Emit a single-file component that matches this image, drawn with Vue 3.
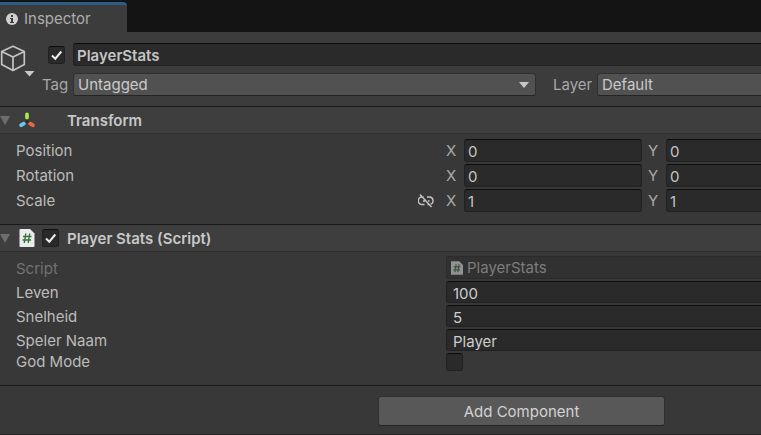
<script setup>
import { reactive, ref } from 'vue'

const active = ref(true)
const enabled = ref(true)
const name = ref('PlayerStats')
const tag = ref('Untagged')
const layer = ref('Default')
const transform = reactive([
  { label: 'Position', x: '0', y: '0' },
  { label: 'Rotation', x: '0', y: '0' },
  { label: 'Scale', x: '1', y: '1', unlinked: true },
])
const stats = reactive([
  { id: 'leven', label: 'Leven', value: '100' },
  { id: 'snelheid', label: 'Snelheid', value: '5' },
  { id: 'naam', label: 'Speler Naam', value: 'Player' },
])
const godMode = ref(false)
</script>

<template>
  <main class="inspector">
    <nav class="tabs">
      <a class="tab" href="#inspector">
        <svg width="12" height="12" viewBox="0 0 12 12">
          <circle cx="6" cy="6" r="6" fill="#d0d0d0" />
          <path d="M5 2h2v2H5zM4 5h3v4h1v1H4V9h1V6H4z" fill="#3c3c3c" />
        </svg>
        <span>Inspector</span>
      </a>
    </nav>

    <header class="object">
      <div class="object-icon">
        <svg width="35" height="33" viewBox="0 0 35 33">
          <path d="M13 1.2 24.3 6.4V19.6L13 25.4 1.7 19.6V6.4ZM1.7 6.4 13 12 24.3 6.4M13 12V25.4" fill="none" stroke="#c4c4c4" stroke-width="1.7" stroke-linejoin="round" />
          <path d="M24.5 26h10L29.500 31.500z" fill="#c8c8c8" />
        </svg>
      </div>
      <div class="object-fields">
        <div class="name-row">
          <span class="check">
            <input v-model="active" type="checkbox" aria-label="Active" />
            <svg v-if="active" width="18" height="18" viewBox="0 0 18 18"><path d="M4 9.500 7.300 12.700 13.300 5.500" /></svg>
          </span>
          <input v-model="name" class="field name open" aria-label="Name" />
        </div>
        <div class="tag-row">
          <label class="tag-label" for="tag">Tag</label>
          <span class="dropdown">
            <select id="tag" v-model="tag"><option>Untagged</option></select>
            <svg width="10" height="6" viewBox="0 0 10 6"><path d="M0 0h10L5 6z" fill="#c8c8c8" /></svg>
          </span>
          <label class="layer-label" for="layer">Layer</label>
          <span class="dropdown layer">
            <select id="layer" v-model="layer" class="open"><option>Default</option></select>
          </span>
        </div>
      </div>
    </header>

    <section class="component">
      <h2 class="title">
        <svg class="fold" width="10" height="9" viewBox="0 0 10 9"><path d="M0 0h10L5 9z" fill="#6e6e6e" /></svg>
        <svg class="icon" width="16" height="18" viewBox="0 0 16 18">
          <path d="M8 8v3M8 10.500 5 12.500M8 10.500 11 12.500" fill="none" stroke="#292b2d" stroke-width="1.600" />
          <g fill="none" stroke-width="3.800" stroke-linecap="round">
            <path d="M8 3.500V6.500" stroke="#a4e84a" />
            <path d="M4.800 12.700 2.200 14.200" stroke="#6cc8f0" />
            <path d="M11.200 12.700 13.800 14.200" stroke="#ee6840" />
          </g>
        </svg>
        <span class="slot"></span>
        <span class="heading">Transform</span>
      </h2>
      <div class="rows vectors">
        <div v-for="row in transform" :key="row.label" class="row">
          <div class="label">
            <span>{{ row.label }}</span>
            <svg v-if="row.unlinked" width="16" height="14" viewBox="0 0 16 14">
              <path d="M5.500 3H4a3.500 3.500 0 0 0 0 7.500h2.500M9 3h2.500a3.700 3.700 0 0 1 1 7.200M9.500 10.500h1.200M5 7h2M10 7h1.500M2 .5 13.500 13" fill="none" stroke="#c4c4c4" stroke-width="1.400" />
            </svg>
          </div>
          <label class="axis"><span>X</span><input v-model="row.x" class="field" /></label>
          <label class="axis last"><span>Y</span><input v-model="row.y" class="field open" /></label>
        </div>
      </div>
    </section>

    <section class="component">
      <h2 class="title">
        <svg class="fold" width="10" height="9" viewBox="0 0 10 9"><path d="M0 0h10L5 9z" fill="#6e6e6e" /></svg>
        <svg class="icon" width="16" height="18" viewBox="0 0 16 18">
          <path d="M1 0H11L15.500 4.500V17q0 1-1 1H1.500q-1 0-1-1V1Z" fill="#ececec" />
          <path d="M6.800 4.500 5.300 14M10.700 4.500 9.200 14M4 7.500h8.500M3.500 11H12" fill="none" stroke="#35733b" stroke-width="1.400" />
        </svg>
        <span class="slot">
          <span class="check">
            <input v-model="enabled" type="checkbox" aria-label="Enabled" />
            <svg v-if="enabled" width="18" height="18" viewBox="0 0 18 18"><path d="M4 9.500 7.300 12.700 13.300 5.500" /></svg>
          </span>
        </span>
        <span class="heading">Player Stats (Script)</span>
      </h2>
      <div class="rows script">
        <div class="row muted">
          <div class="label">Script</div>
          <div class="field reference open">
            <svg width="12" height="14" viewBox="0 0 16 18">
              <path d="M0 0H11L16 5V18H0Z" fill="#929292" />
              <path d="M6.800 4 5.300 14.500M10.700 4 9.200 14.500M3.500 7.500h9M3 11.500h9" fill="none" stroke="#35583a" stroke-width="1.600" />
            </svg>
            <span>PlayerStats</span>
          </div>
        </div>
        <div v-for="row in stats" :key="row.id" class="row">
          <label class="label" :for="row.id">{{ row.label }}</label>
          <input :id="row.id" v-model="row.value" class="field value open" />
        </div>
        <div class="row toggle">
          <label class="label" for="god">God Mode</label>
          <span class="check">
            <input id="god" v-model="godMode" type="checkbox" />
            <svg v-if="godMode" width="18" height="18" viewBox="0 0 18 18"><path d="M4 9.500 7.300 12.700 13.300 5.500" /></svg>
          </span>
        </div>
      </div>
    </section>

    <footer class="actions">
      <button type="button">Add Component</button>
    </footer>
  </main>
</template>

<style>
body {
  margin: 0;
  background: #383838;
}
</style>

<style scoped>
* {
  box-sizing: border-box;
}
.inspector {
  background: #383838;
  color: #bcbcbc;
  font: 15px/20px Inter, "Liberation Sans", sans-serif;
  overflow: hidden;
}
svg {
  display: block;
  flex: none;
}
input,
select,
button {
  margin: 0;
  font: inherit;
  color: inherit;
  appearance: none;
}
.tabs {
  display: flex;
  height: 32px;
  padding-top: 2px;
  background: #141414;
}
.tab {
  display: flex;
  align-items: center;
  gap: 6px;
  width: 127px;
  padding-left: 6px;
  border-top: 3px solid #2c5d87;
  border-top-right-radius: 4px;
  background: #3c3c3c;
  color: #adadad;
  text-decoration: none;
}
.object {
  display: flex;
  padding: 11px 0 10px;
  background: #3c3c3c;
}
.object-icon {
  width: 42px;
  padding-top: 2px;
}
.object-fields {
  flex: 1;
  min-width: 0;
}
.name-row {
  display: flex;
  align-items: center;
  gap: 8px;
  padding-left: 6px;
}
.tag-row {
  display: flex;
  align-items: center;
  margin-top: 7px;
  color: #a8a8a8;
}
.tag-label {
  width: 31px;
}
.layer-label {
  width: 61px;
  padding-left: 17px;
}
.field {
  width: 100%;
  min-width: 0;
  height: 23px;
  padding: 2px 3px 0;
  border: 1px solid #212121;
  border-top-color: #0d0d0d;
  border-radius: 3px;
  outline: none;
  background: #2a2a2a;
  color: #c4c4c4;
}
.open {
  border-right: 0;
  border-top-right-radius: 0;
  border-bottom-right-radius: 0;
}
.name {
  flex: 1;
  font-weight: 600;
}
.dropdown {
  display: grid;
  flex: 1;
  align-items: center;
}
.dropdown.layer {
  flex: 0 0 164px;
}
.dropdown > * {
  grid-area: 1 / 1;
}
.dropdown svg {
  justify-self: end;
  margin-right: 7px;
  pointer-events: none;
}
select {
  width: 100%;
  height: 23px;
  padding: 0 4px;
  border: 1px solid #303030;
  border-bottom-color: #242424;
  border-radius: 3px;
  outline: none;
  background: #515151;
  color: #cacaca;
}
.check {
  display: grid;
  width: 17px;
  height: 18px;
}
.check > * {
  grid-area: 1 / 1;
}
.check input {
  width: 17px;
  height: 18px;
  border: 1px solid #212121;
  border-top-color: #0d0d0d;
  border-radius: 3px;
  background: #2a2a2a;
}
.check svg {
  fill: none;
  stroke: #ededed;
  stroke-width: 2;
  pointer-events: none;
}
.component {
  border-top: 1px solid #1a1a1a;
}
.title {
  display: flex;
  align-items: center;
  height: 27px;
  margin: 0;
  border-bottom: 1px solid #303030;
  background: #3e3e3e;
  color: #c8c8c8;
  font-size: 15px;
  font-weight: 600;
}
.heading {
  padding-top: 2px;
}
.icon {
  margin-left: 9px;
}
.slot {
  width: 32px;
  padding-left: 7px;
}
.rows {
  display: grid;
}
.vectors {
  gap: 2px;
  padding: 5px 0 12px;
}
.script {
  gap: 2px;
  padding: 4px 0 14px;
}
.row {
  display: flex;
  align-items: center;
}
.label {
  display: flex;
  flex: 0 0 446px;
  align-items: center;
  justify-content: space-between;
  padding: 0 12px 0 16px;
}
.axis {
  display: flex;
  flex: 0 0 196px;
  align-items: center;
  margin-right: 6px;
  color: #a8a8a8;
}
.axis.last {
  flex: 1;
  margin-right: 0;
}
.axis span {
  flex: 0 0 18px;
}
.script .label {
  padding-top: 2px;
}
.script .toggle .label {
  padding-top: 0;
}
.script .field {
  flex: 1;
}
.script .value {
  height: 22px;
  padding-left: 6px;
  color: #cdcdcd;
}
.muted {
  color: #727272;
}
.script .reference {
  display: flex;
  align-items: center;
  gap: 4px;
  padding: 0 0 0 4px;
  border-color: #2b2b2b;
  background: #313131;
  color: #7c7c7c;
}
.toggle {
  height: 18px;
}
.actions {
  display: flex;
  justify-content: flex-end;
  padding: 10px 96px 8px 0;
  border-top: 1px solid #1a1a1a;
  border-bottom: 1px solid #242424;
}
button {
  width: 287px;
  height: 30px;
  padding: 2px 0 0;
  border: 1px solid #303030;
  border-bottom-color: #242424;
  border-radius: 3px;
  background: #585858;
  color: #d2d2d2;
}
</style>
